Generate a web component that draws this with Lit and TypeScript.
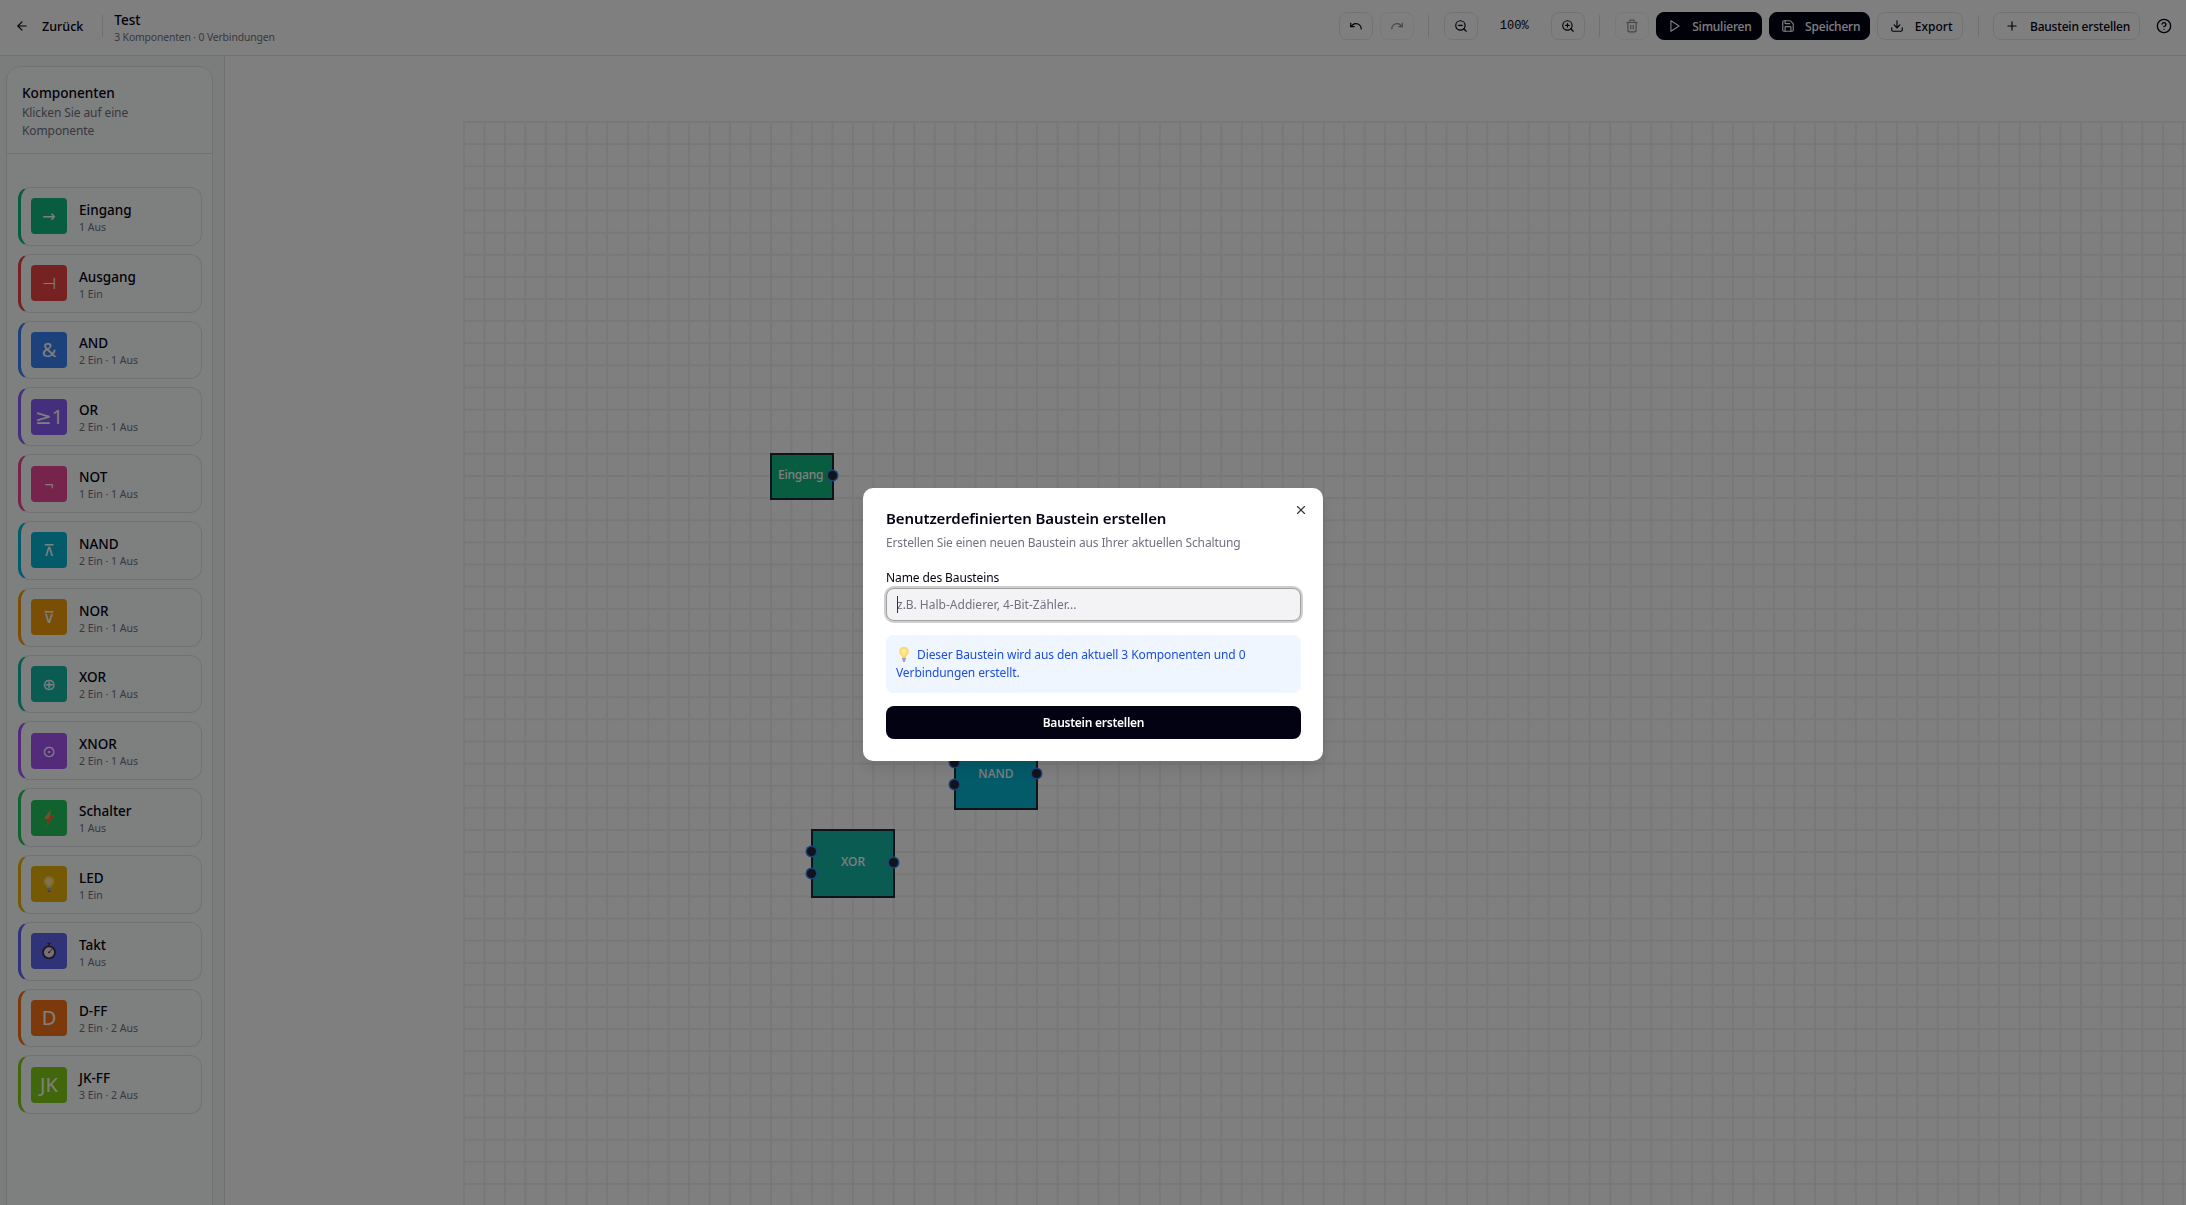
import { LitElement, html, css, svg } from 'lit'
import { customElement } from 'lit/decorators.js'

const icon = (body: unknown, size = 14) => html`
  <svg class="ico" width=${size} height=${size} viewBox="0 0 24 24" fill="none" stroke="currentColor"
    stroke-width="2" stroke-linecap="round" stroke-linejoin="round">${body}</svg>
`

const arrowLeft = svg`<path d="m12 19-7-7 7-7"/><path d="M19 12H5"/>`
const undo = svg`<path d="M3 7v6h6"/><path d="M21 17a9 9 0 0 0-9-9 9 9 0 0 0-6 2.3L3 13"/>`
const redo = svg`<path d="M21 7v6h-6"/><path d="M3 17a9 9 0 0 1 9-9 9 9 0 0 1 6 2.3l3 2.7"/>`
const zoomOut = svg`<circle cx="11" cy="11" r="8"/><path d="m21 21-4.3-4.3"/><path d="M8 11h6"/>`
const zoomIn = svg`<circle cx="11" cy="11" r="8"/><path d="m21 21-4.3-4.3"/><path d="M11 8v6"/><path d="M8 11h6"/>`
const trash = svg`<path d="M3 6h18"/><path d="M19 6v14c0 1-1 2-2 2H7c-1 0-2-1-2-2V6"/><path d="M8 6V4c0-1 1-2 2-2h4c1 0 2 1 2 2v2"/><path d="M10 11v6"/><path d="M14 11v6"/>`
const play = svg`<polygon points="5 3 19 12 5 21 5 3"/>`
const save = svg`<path d="M15.2 3a2 2 0 0 1 1.4.6l3.8 3.8a2 2 0 0 1 .6 1.4V19a2 2 0 0 1-2 2H5a2 2 0 0 1-2-2V5a2 2 0 0 1 2-2z"/><path d="M17 21v-7a1 1 0 0 0-1-1H8a1 1 0 0 0-1 1v7"/><path d="M7 3v4a1 1 0 0 0 1 1h7"/>`
const download = svg`<path d="M21 15v4a2 2 0 0 1-2 2H5a2 2 0 0 1-2-2v-4"/><path d="m7 10 5 5 5-5"/><path d="M12 15V3"/>`
const plus = svg`<path d="M5 12h14"/><path d="M12 5v14"/>`
const help = svg`<circle cx="12" cy="12" r="10"/><path d="M9.09 9a3 3 0 0 1 5.83 1c0 2-3 3-3 3"/><path d="M12 17h.01"/>`
const close = svg`<path d="M18 6 6 18"/><path d="m6 6 12 12"/>`

const bolt = html`<svg width="12" height="18" viewBox="0 0 14 20">
  <polygon points="9,0 1,11 6,11 4,20 13,7 8,7" fill="#ff9a5c"/>
  <polygon points="6,11 4,20 13,7 8,7" fill="#f2693c"/>
</svg>`

const bulb = (w = 14, h = 20) => html`<svg class="bulb" width=${w} height=${h} viewBox="0 0 14 20">
  <path d="M7 1a6 6 0 0 0-3.6 10.8c.8.7 1.1 1.6 1.1 2.7h5c0-1.100.3-2 1.100-2.700A6 6 0 0 0 7 1z" fill="#ffd969"/>
  <path d="M7 3.500a3.500 3.500 0 0 0-2 6.300c.6.500 1 1.300 1.100 2.200h1.800c.1-.9.500-1.700 1.100-2.200A3.500 3.500 0 0 0 7 3.500z" fill="#ffe99a"/>
  <rect x="4.600" y="14.500" width="4.800" height="3.500" rx="1" fill="#a9a4c4"/>
  <rect x="5.500" y="18" width="3" height="1.400" rx=".7" fill="#6f6a8e"/>
</svg>`

const watch = html`<svg width="14" height="18" viewBox="0 0 16 20">
  <rect x="6" y="0.500" width="4" height="1.800" rx=".5" fill="#3a3a48"/>
  <rect x="7.200" y="2" width="1.600" height="2" fill="#3a3a48"/>
  <circle cx="8" cy="11.500" r="7.800" fill="#2f2f3c"/>
  <circle cx="8" cy="11.500" r="5.800" fill="#e6e4ee"/>
  <path d="M8 11.500 11.500 7.500" stroke="#e64444" stroke-width="1.300" stroke-linecap="round"/>
  <circle cx="8" cy="11.500" r="1" fill="#2f2f3c"/>
</svg>`

interface Part {
  name: string
  sub: string
  color: string
  glyph: unknown
  size?: number
}

const parts: Part[] = [
  { name: 'Eingang', sub: '1 Aus', color: '#10b981', glyph: '→' },
  { name: 'Ausgang', sub: '1 Ein', color: '#ef4444', glyph: '⊣' },
  { name: 'AND', sub: '2 Ein · 1 Aus', color: '#3b82f6', glyph: '&', size: 20 },
  { name: 'OR', sub: '2 Ein · 1 Aus', color: '#8b5cf6', glyph: '≥1', size: 20 },
  { name: 'NOT', sub: '1 Ein · 1 Aus', color: '#ec4899', glyph: '¬' },
  { name: 'NAND', sub: '2 Ein · 1 Aus', color: '#06b6d4', glyph: '⊼' },
  { name: 'NOR', sub: '2 Ein · 1 Aus', color: '#f59e0b', glyph: '⊽' },
  { name: 'XOR', sub: '2 Ein · 1 Aus', color: '#14b8a6', glyph: '⊕' },
  { name: 'XNOR', sub: '2 Ein · 1 Aus', color: '#a855f7', glyph: '⊙' },
  { name: 'Schalter', sub: '1 Aus', color: '#22c55e', glyph: bolt },
  { name: 'LED', sub: '1 Ein', color: '#eab308', glyph: bulb(12, 18) },
  { name: 'Takt', sub: '1 Aus', color: '#6366f1', glyph: watch },
  { name: 'D-FF', sub: '2 Ein · 2 Aus', color: '#f97316', glyph: 'D', size: 20 },
  { name: 'JK-FF', sub: '3 Ein · 2 Aus', color: '#84cc16', glyph: 'JK', size: 20 },
]

@customElement('app-root')
export class AppRoot extends LitElement {
  render() {
    return html`
      <header class="top">
        <button class="back">${icon(arrowLeft)}<span>Zurück</span></button>
        <div class="title-wrap">
          <div class="title">Test</div>
          <div class="title-sub">3 Komponenten · 0 Verbindungen</div>
        </div>
        <div class="tools">
          <button class="tool square">${icon(undo)}</button>
          <button class="tool square off">${icon(redo)}</button>
          <i class="sep"></i>
          <button class="tool square">${icon(zoomOut)}</button>
          <span class="zoom">100%</span>
          <button class="tool square">${icon(zoomIn)}</button>
          <i class="sep"></i>
          <button class="tool square off">${icon(trash)}</button>
          <button class="tool dark">${icon(play)}<span>Simulieren</span></button>
          <button class="tool dark">${icon(save)}<span>Speichern</span></button>
          <button class="tool export">${icon(download)}<span>Export</span></button>
          <i class="sep"></i>
          <button class="tool">${icon(plus)}<span>Baustein erstellen</span></button>
          <button class="tool square plain">${icon(help, 16)}</button>
        </div>
      </header>

      <main class="body">
        <aside class="side">
          <div class="panel">
            <div class="panel-head">
              <div class="panel-title">Komponenten</div>
              <div class="panel-sub">Klicken Sie auf eine Komponente</div>
            </div>
            <div class="list">
              ${parts.map(p => html`
                <div class="item" style="border-left-color:${p.color}">
                  <div class="glyph" style="background:${p.color};font-size:${p.size ?? 16}px">${p.glyph}</div>
                  <div class="item-text">
                    <div class="item-name">${p.name}</div>
                    <div class="item-sub">${p.sub}</div>
                  </div>
                </div>
              `)}
            </div>
          </div>
        </aside>

        <section class="canvas">
          <div class="grid"></div>
          <div class="node n-in">Eingang<b class="port" style="left:56px;top:16px"></b></div>
          <div class="node n-nand">NAND
            <b class="port" style="left:-6px;top:15px"></b>
            <b class="port" style="left:-6px;top:37px"></b>
            <b class="port" style="right:-5px;top:26px"></b>
          </div>
          <div class="node n-xor">XOR
            <b class="port" style="left:-6px;top:16px"></b>
            <b class="port" style="left:-6px;top:38px"></b>
            <b class="port" style="right:-5px;top:27px"></b>
          </div>
        </section>
      </main>

      <div class="scrim">
        <div class="modal">
          <button class="x">${icon(close)}</button>
          <h2>Benutzerdefinierten Baustein erstellen</h2>
          <p class="lead">Erstellen Sie einen neuen Baustein aus Ihrer aktuellen Schaltung</p>
          <label>Name des Bausteins</label>
          <div class="field">
            <input placeholder="z.B. Halb-Addierer, 4-Bit-Zähler..." />
            <i class="caret"></i>
          </div>
          <div class="note">${bulb(12, 16)}<span>Dieser Baustein wird aus den aktuell 3 Komponenten und 0 Verbindungen erstellt.</span></div>
          <button class="submit">Baustein erstellen</button>
        </div>
      </div>
    `
  }

  static styles = css`
    :host {
      display: block;
      height: 100vh;
      overflow: hidden;
      background: #fff;
      color: #030213;
      font-family: 'Noto Sans', 'DejaVu Sans', sans-serif;
    }

    button {
      font: inherit;
      color: inherit;
      background: none;
      border: none;
      padding: 0;
    }

    .ico {
      flex: none;
      display: block;
    }

    .top {
      height: 55px;
      border-bottom: 1px solid #e3e5e8;
      display: flex;
      align-items: center;
      padding-left: 15px;
    }

    .back {
      display: flex;
      align-items: center;
      gap: 13px;
      font-size: 12.5px;
      font-weight: 500;
      padding-right: 19px;
      border-right: 1px solid #dcdee2;
      height: 22px;
      margin-bottom: 3px;
    }

    .title-wrap {
      margin-left: 11px;
    }

    .title {
      font-size: 13.5px;
      font-weight: 500;
      line-height: 18px;
    }

    .title-sub {
      font-size: 10.4px;
      letter-spacing: -0.15px;
      line-height: 16px;
      color: #717182;
    }

    .tools {
      margin-left: auto;
      margin-bottom: 3px;
      display: flex;
      align-items: center;
      gap: 7px;
      padding-right: 5px;
    }

    .tool {
      height: 28px;
      box-sizing: border-box;
      border: 1px solid #e6e7ea;
      border-radius: 8px;
      display: flex;
      align-items: center;
      gap: 10.5px;
      padding: 0 9px 0 11px;
      font-size: 12px;
      font-weight: 500;
      letter-spacing: -0.2px;
      white-space: nowrap;
    }

    .export {
      padding: 0 10px 0 12px;
      letter-spacing: 0;
    }

    .square {
      width: 34px;
      padding: 0;
      justify-content: center;
    }

    .off svg {
      opacity: 0.45;
    }

    .off {
      border-color: #eff0f2;
    }

    .plain {
      border: none;
    }

    .dark {
      background: #030213;
      border-color: #030213;
      color: #fff;
    }

    .sep {
      width: 1px;
      height: 22px;
      margin: 0 7.5px;
      background: #dcdee2;
    }

    .zoom {
      width: 59px;
      text-align: center;
      font-family: 'Liberation Mono', monospace;
      font-size: 12px;
    }

    .body {
      display: flex;
      height: calc(100vh - 56px);
    }

    .side {
      width: 224px;
      box-sizing: content-box;
      flex: none;
      border-right: 1px solid #dfe1e4;
      background: #f4fbf9;
      display: flex;
      flex-direction: column;
      padding-top: 10px;
      overflow: hidden;
    }

    .panel {
      width: 207px;
      box-sizing: border-box;
      margin-left: 6px;
      flex: 1;
      margin-bottom: -20px;
      background: #fdfefe;
      border: 1px solid #e3e5e8;
      border-radius: 14px;
    }

    .panel-head {
      height: 87px;
      box-sizing: border-box;
      border-bottom: 1px solid #e3e5e8;
      padding: 17px 15px 0;
    }

    .panel-title {
      font-size: 13.6px;
      font-weight: 500;
      line-height: 18px;
    }

    .panel-sub {
      font-size: 12px;
      letter-spacing: -0.1px;
      line-height: 18px;
      padding-top: 2px;
      color: #717182;
    }

    .list {
      padding: 33px 10px 0 11px;
      display: flex;
      flex-direction: column;
      gap: 8px;
    }

    .item {
      height: 58.8px;
      box-sizing: border-box;
      border: 1px solid #e3e5e8;
      border-left: 3px solid;
      border-radius: 12px;
      display: flex;
      align-items: center;
      gap: 12px;
      padding-left: 10px;
    }

    .glyph {
      width: 36px;
      height: 36px;
      flex: none;
      border-radius: 4px;
      color: #fff;
      display: flex;
      align-items: center;
      justify-content: center;
    }

    .item-text {
      padding-top: 3px;
    }

    .item-name {
      font-size: 13.5px;
      font-weight: 500;
      line-height: 19px;
    }

    .item-sub {
      font-size: 10.5px;
      line-height: 15px;
      color: #717182;
    }

    .canvas {
      flex: 1;
      position: relative;
      overflow: hidden;
    }

    .grid {
      position: absolute;
      left: 238px;
      top: 65px;
      right: 0;
      bottom: 0;
      background-image:
        linear-gradient(to right, #f1f1f1 2px, transparent 2px),
        linear-gradient(to bottom, #f1f1f1 2px, transparent 2px);
      background-size: 20.47px 22.13px;
    }

    .node {
      position: absolute;
      box-sizing: border-box;
      border: 2px solid #1f2937;
      color: #fff;
      font-size: 12px;
      font-weight: 500;
      padding-bottom: 5px;
      display: flex;
      align-items: center;
      justify-content: center;
    }

    .n-in {
      left: 545px;
      top: 397px;
      width: 64px;
      height: 47px;
      background: #10b981;
      justify-content: flex-start;
      padding-left: 6px;
      letter-spacing: -0.2px;
    }

    .n-nand {
      left: 729px;
      top: 685px;
      width: 84px;
      height: 69px;
      background: #06b6d4;
    }

    .n-xor {
      left: 586px;
      top: 773px;
      width: 84px;
      height: 69px;
      background: #14b8a6;
    }

    .port {
      position: absolute;
      width: 9px;
      height: 9px;
      box-sizing: content-box;
      border-radius: 50%;
      background: #1f2937;
      box-shadow: 0 0 0 1.500px #3b82f6;
    }

    .scrim {
      position: fixed;
      inset: 0;
      background: rgba(0, 0, 0, 0.5);
      display: flex;
      justify-content: center;
      align-items: center;
      padding-top: 44px;
      box-sizing: border-box;
    }

    .modal {
      width: 460px;
      height: 273px;
      box-sizing: border-box;
      position: relative;
      background: #fff;
      border-radius: 10px;
      padding: 21px 22px 22px 23px;
      box-shadow: 0 8px 16px rgba(0, 0, 0, 0.1);
    }

    .x {
      position: absolute;
      top: 15px;
      right: 15px;
      color: #333;
    }

    h2 {
      margin: 0;
      font-size: 15px;
      font-weight: 600;
      letter-spacing: -0.1px;
      line-height: 18px;
    }

    .lead {
      margin: 7px 0 0;
      font-size: 12px;
      letter-spacing: -0.13px;
      line-height: 18px;
      color: #717182;
    }

    label {
      display: block;
      margin-top: 18px;
      font-size: 12px;
      letter-spacing: -0.1px;
      line-height: 16px;
    }

    .field {
      position: relative;
      margin-top: 2px;
    }

    input {
      display: block;
      width: 100%;
      height: 33px;
      box-sizing: border-box;
      background: #f3f3f5;
      border: 1px solid #a1a1a1;
      border-radius: 8px;
      box-shadow: 0 0 0 2px #cfcfcf;
      padding: 0 10px;
      outline: none;
      font: inherit;
      font-size: 12px;
    }

    input::placeholder {
      color: #717182;
      opacity: 1;
    }

    .caret {
      position: absolute;
      left: 10.500px;
      top: 8px;
      width: 1px;
      height: 17px;
      background: #333;
    }

    .note {
      margin-top: 14px;
      height: 58px;
      box-sizing: border-box;
      padding: 11px 10px;
      background: #eff6ff;
      border-radius: 8px;
      font-size: 12px;
      letter-spacing: -0.1px;
      line-height: 18px;
      color: #1d4ed8;
    }

    .bulb {
      vertical-align: -3px;
      margin: 0 7px 0 2px;
    }

    .glyph .bulb {
      margin: 0;
    }

    .submit {
      display: block;
      width: 100%;
      height: 33px;
      margin-top: 13px;
      background: #030213;
      color: #fff;
      border-radius: 8px;
      font-size: 12px;
      font-weight: 600;
      letter-spacing: -0.25px;
    }
  `
}

declare global {
  interface HTMLElementTagNameMap {
    'app-root': AppRoot
  }
}
